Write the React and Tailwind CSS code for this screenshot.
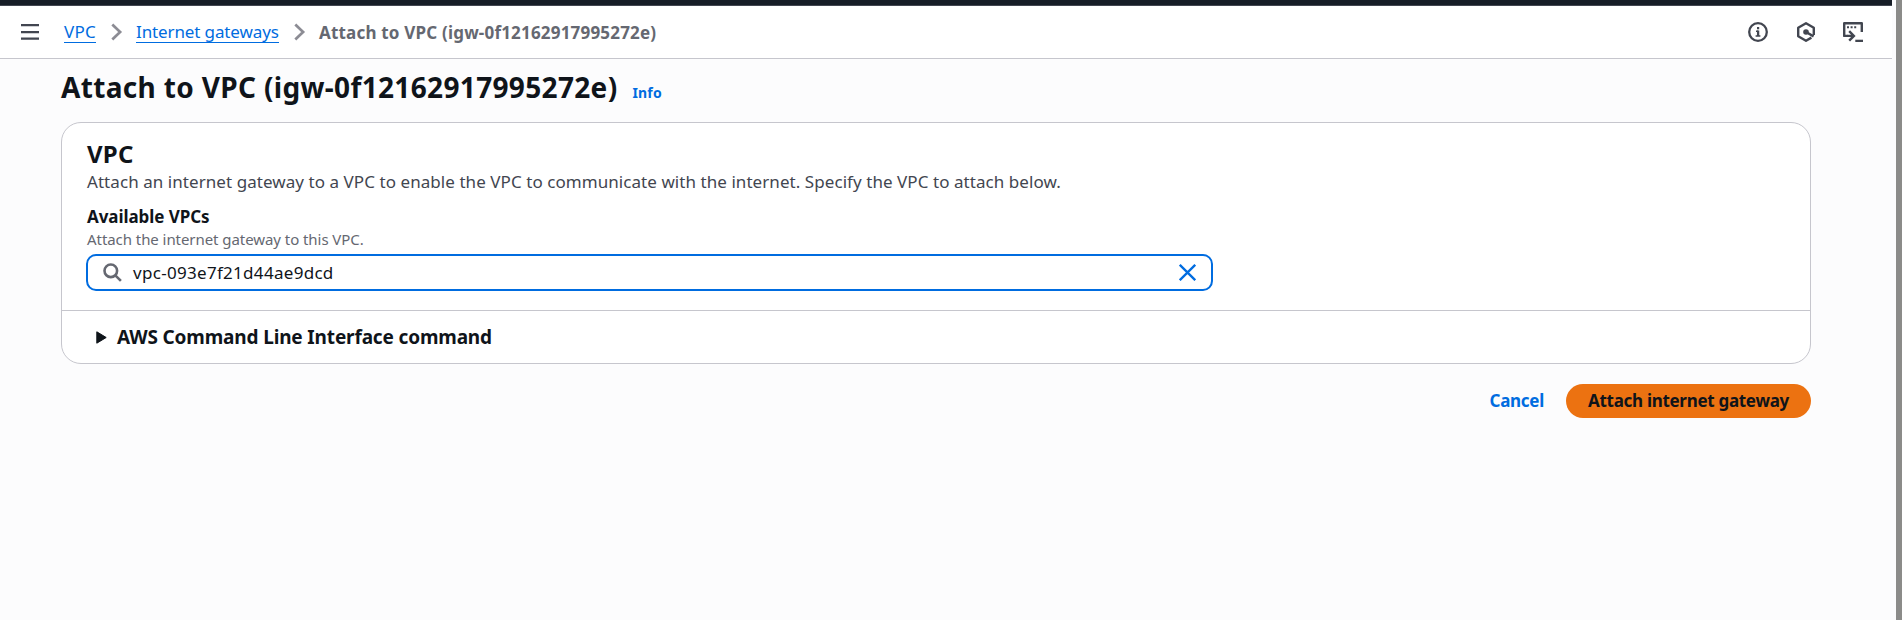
function Chevron({ className }) {
  return (
    <svg className={className} width="12" height="18" viewBox="0 0 12 18" fill="none" stroke="#8c8c94" strokeWidth="2.7">
      <path d="M1.300 1.500 9.100 9 1.300 16.500" />
    </svg>
  );
}

function MenuIcon() {
  return (
    <svg width="18" height="18" viewBox="0 0 18 18" fill="#424650" className="shrink-0">
      <path d="M0 1h18v2.200H0zM0 8h18v2.200H0zM0 14.500h18v2.200H0z" />
    </svg>
  );
}

function InfoIcon() {
  return (
    <svg width="20" height="20" viewBox="0 0 20 20" fill="none" stroke="#424650" strokeWidth="2.3">
      <circle cx="10" cy="10" r="8.800" />
      <path d="M8 9.200h2.200M7.600 14h4.800" strokeWidth="1.500" />
      <path d="M9 5h2.200v2.300H9z" fill="#424650" stroke="none" />
      <path d="M10.100 8.500V14" />
    </svg>
  );
}

function HexIcon() {
  return (
    <svg width="20" height="20" viewBox="0 0 20 20" fill="none" stroke="#424650" strokeWidth="2.4" strokeLinejoin="round">
      <path d="M17.800 13V5.800L10 1.300 2.200 5.800v8.400L10 18.700l5.400-3.100" />
      <path d="m10 10 7.600 4.400" />
      <circle cx="10" cy="10" r="2.800" fill="#424650" stroke="none" />
    </svg>
  );
}

function ShellIcon() {
  return (
    <svg width="20" height="20" viewBox="0 0 20 20" fill="none" stroke="#424650" strokeWidth="2.4">
      <path d="M5 13.900H1.200V1.200h17.600V10" strokeLinejoin="round" />
      <path d="M4.500 13.900h6M6.200 9.200l4.700 4.700-4.700 4.700" />
      <path d="M12.300 18.900H20" />
      <path d="M4 4.200h2v2H4zM7.600 4.200h2v2h-2zM11.200 4.200h2v2h-2z" fill="#424650" stroke="none" />
    </svg>
  );
}

export default function App() {
  return (
    <div className="flex h-[620px] w-[1902px] overflow-hidden bg-[#fcfcfd] font-['Noto_Sans',sans-serif] text-[17px] text-[#0f141a]">
      <div className="flex min-w-0 flex-1 flex-col">
        <div className="mr-1 h-1.5 shrink-0 border-b border-[#424650] bg-[#161d26]" />
        <header className="mr-1 flex h-[53px] shrink-0 items-center border-b border-[#c6c6cd] bg-white pr-[29px] pl-[21px]">
          <MenuIcon />
          <nav className="ml-[25px] flex items-center leading-[21px] whitespace-nowrap">
            <a className="w-8 border-b border-[#006ce0] tracking-[0.25px] text-[#006ce0]">VPC</a>
            <Chevron className="ml-[15px]" />
            <a className="ml-[13px] w-[143px] border-b border-[#006ce0] tracking-[-0.12px] text-[#006ce0]">Internet gateways</a>
            <Chevron className="ml-[15px]" />
            <span className="ml-[13px] font-bold tracking-[0.19px] text-[#656871]">Attach to VPC (igw-0f12162917995272e)</span>
          </nav>
          <div className="ml-auto flex items-center">
            <InfoIcon />
            <span className="mr-[27px] ml-7">
              <HexIcon />
            </span>
            <ShellIcon />
          </div>
        </header>

        <main className="flex flex-col pt-2.5 pr-[85px] pl-[61px]">
          <div className="flex items-baseline whitespace-nowrap">
            <h1 className="text-[28px] leading-9 font-bold tracking-[0.34px]">Attach to VPC (igw-0f12162917995272e)</h1>
            <a className="ml-[15px] text-[14px] font-bold tracking-[0.15px] text-[#006ce0]">Info</a>
          </div>

          <section className="mt-[17px] rounded-[20px] border border-[#c6c6cd] bg-white">
            <div className="flex flex-col px-[25px] pt-4 pb-[19px]">
              <h2 className="text-[24px] leading-[30px] font-bold tracking-[0.2px]">VPC</h2>
              <p className="pt-px leading-6 tracking-[0.06px] text-[#424650]">
                Attach an internet gateway to a VPC to enable the VPC to communicate with the internet. Specify the VPC to attach below.
              </p>
              <label className="mt-[11px] leading-6 font-bold tracking-[-0.07px]">Available VPCs</label>
              <p className="text-[15px] leading-5 tracking-[-0.06px] text-[#656871]">Attach the internet gateway to this VPC.</p>
              <div className="mt-[5px] -ml-px flex h-[37px] w-[1127px] items-center rounded-[10px] border-2 border-[#006ce0] px-[15px]">
                <svg width="19" height="19" viewBox="0 0 19 19" fill="none" stroke="#656871" strokeWidth="2.6">
                  <circle cx="7.800" cy="7.800" r="6.300" />
                  <path d="m12.300 12.300 5.600 5.600" />
                </svg>
                <span className="ml-[11px] leading-6 tracking-[0.3px]">vpc-093e7f21d44ae9dcd</span>
                <svg className="ml-auto" width="17" height="17" viewBox="0 0 17 17" stroke="#006ce0" strokeWidth="2.3">
                  <path d="m.8.8 15.400 15.400M16.200.8.8 16.200" />
                </svg>
              </div>
            </div>
            <div className="flex h-[53px] items-center border-t border-[#c6c6cd] pl-[34px]">
              <svg width="11" height="13" viewBox="0 0 11 13" fill="#0f141a" stroke="#0f141a" strokeLinejoin="round">
                <path d="M.8.8v11.400l9.400-5.700z" />
              </svg>
              <span className="ml-2.5 text-[19px] leading-6 font-bold tracking-[-0.15px]">AWS Command Line Interface command</span>
            </div>
          </section>

          <div className="mt-5 flex items-center justify-end font-bold">
            <button className="mr-[22px] tracking-[-0.28px] text-[#006ce0]">Cancel</button>
            <button className="h-[34px] w-[245px] rounded-full bg-[#ec7211] tracking-[-0.3px] whitespace-nowrap">Attach internet gateway</button>
          </div>
        </main>
      </div>
      <div className="w-1.5 shrink-0 bg-[#8b8b89]" />
    </div>
  );
}
